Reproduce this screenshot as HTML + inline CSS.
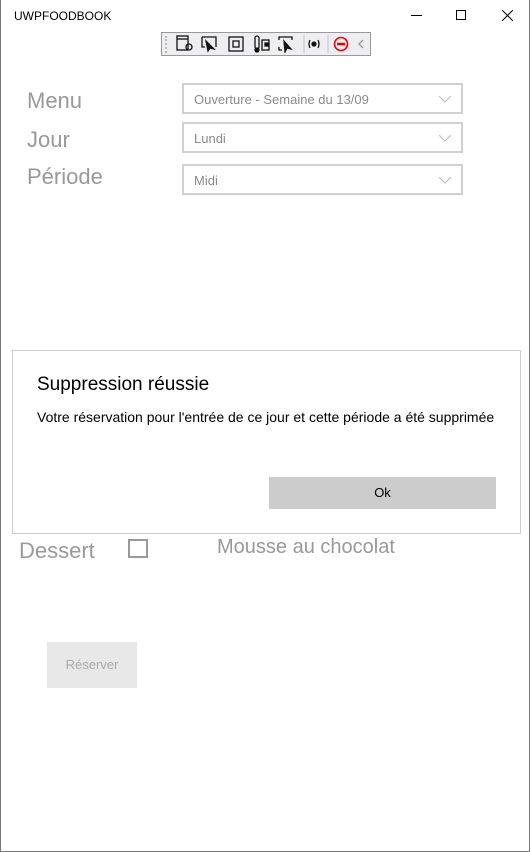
<!DOCTYPE html>
<html><head><meta charset="utf-8"><style>
*{margin:0;padding:0;box-sizing:border-box}
body{width:531px;height:852px;background:#fff;font-family:"Segoe UI","Liberation Sans",sans-serif;position:relative;overflow:hidden}
.abs{position:absolute}
.win{left:0;top:0;width:530px;height:852px;border:1px solid #777;border-top:none}
.lbl{color:#999;font-size:22px;left:27px}
.cb{left:182px;width:281px;height:31px;border:2px solid #d0d0d0;color:#8a8a8a;font-size:13px;padding:7px 10px}
.cb svg{position:absolute;right:10px;top:11px}
</style></head><body>
<div class="abs win"></div>
<div class="abs" style="left:14px;top:9px;font-size:12px;color:#000">UWPFOODBOOK</div>
<div class="abs" style="left:411px;top:15px;width:11px;height:1px;background:#000"></div>
<div class="abs" style="left:456px;top:10px;width:10px;height:10px;border:1px solid #000"></div>
<svg class="abs" style="left:502px;top:10px" width="11" height="11"><path d="M0 0L11 11M11 0L0 11" stroke="#000"/></svg>
<div class="abs" style="left:161px;top:32px;width:210px;height:24px;background:#eeeef2;border:1px solid #999"></div>
<div class="abs" style="left:165px;top:36px;width:4px;height:17px;border-left:2px dotted #bbb"></div>
<svg class="abs" style="left:176px;top:35px" width="195" height="18" fill="none" stroke="#111" stroke-width="1.3">
<rect x="1" y="1" width="11" height="14"/><line x1="1" y1="4" x2="12" y2="4"/><circle cx="13" cy="12" r="3"/>
<path d="M26 2H40V12M26 2V12H29"/><path d="M30 6L38 14L34 13L32 16Z" fill="#111"/>
<rect x="53" y="2" width="14" height="14"/><rect x="57" y="6" width="6" height="6"/>
<rect x="79" y="1" width="4" height="13" rx="2"/><circle cx="81" cy="15" r="2" fill="#111"/><rect x="86" y="5" width="7" height="10"/><rect x="89" y="8" width="3" height="3" fill="#111"/>
<path d="M103 5V2H116V5M103 12V15H106"/><path d="M108 6L115 14L111 13L109 17Z" fill="#111"/>
<path d="M134 5Q132 9 134 13M142 5Q144 9 142 13"/><circle cx="138" cy="9" r="2" fill="#111"/>
<line x1="128" y1="0" x2="128" y2="18" stroke="#ccc"/><line x1="152" y1="0" x2="152" y2="18" stroke="#ccc"/>
<circle cx="165" cy="9" r="6.5" stroke="#e00" stroke-width="1.6"/><line x1="161" y1="9" x2="169" y2="9" stroke="#e00" stroke-width="2.5"/>
<path d="M187 5L183 9L187 13" stroke="#999"/>
</svg>
<div class="abs lbl" style="top:88px">Menu</div>
<div class="abs lbl" style="top:127px">Jour</div>
<div class="abs lbl" style="top:164px">Période</div>
<div class="abs cb" style="top:83px">Ouverture - Semaine du 13/09<svg width="12" height="7"><path d="M0 0L6 6L12 0" stroke="#bbb" fill="none"/></svg></div>
<div class="abs cb" style="top:122px">Lundi<svg width="12" height="7"><path d="M0 0L6 6L12 0" stroke="#bbb" fill="none"/></svg></div>
<div class="abs cb" style="top:164px">Midi<svg width="12" height="7"><path d="M0 0L6 6L12 0" stroke="#bbb" fill="none"/></svg></div>
<div class="abs" style="left:12px;top:350px;width:509px;height:184px;border:1px solid #ccc;background:#fff"></div>
<div class="abs" style="left:37px;top:374px;font-size:19px;color:#000">Suppression réussie</div>
<div class="abs" style="left:37px;top:409px;font-size:14px;color:#000">Votre réservation pour l'entrée de ce jour et cette période a été supprimée</div>
<div class="abs" style="left:269px;top:477px;width:227px;height:32px;background:#ccc;font-size:13px;text-align:center;line-height:32px">Ok</div>
<div class="abs lbl" style="left:19px;top:538px">Dessert</div>
<div class="abs" style="left:128px;top:539px;width:20px;height:19px;border:2px solid #999"></div>
<div class="abs" style="left:217px;top:536px;font-size:20px;color:#999">Mousse au chocolat</div>
<div class="abs" style="left:47px;top:642px;width:90px;height:46px;background:#e8e8e8;color:#aaa;font-size:13px;text-align:center;line-height:46px">Réserver</div>
</body></html>
